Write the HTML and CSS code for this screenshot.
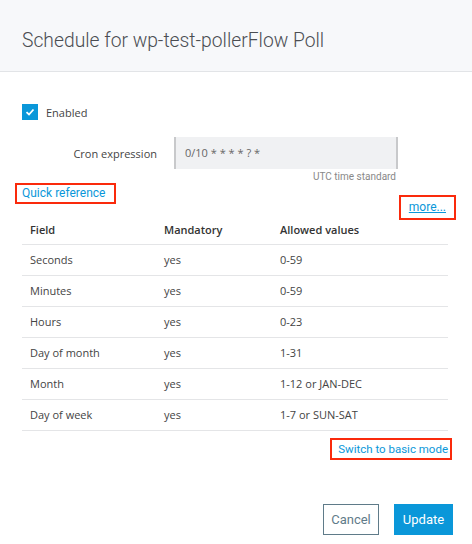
FILE: index.html
```html
<!DOCTYPE html>
<html>
<head>
<meta charset="utf-8">
<link rel="stylesheet" href="styles.css">
</head>
<body>
<div class="modal">
  <div class="modal-header">
    <h1 class="title">Schedule for wp-test-pollerFlow Poll</h1>
  </div>
  <div class="modal-body">
    <label class="check-row">
      <span class="checkbox">
        <svg width="10" height="8" viewBox="0 0 10 8"><path d="M1.5 4.2 L4 6.5 L8.5 1.5" fill="none" stroke="#fff" stroke-width="1.8"/></svg>
      </span>
      <span class="check-label">Enabled</span>
    </label>
    <div class="cron-row">
      <span class="cron-label">Cron expression</span>
      <div class="cron-input">0/10 * * * * ? *</div>
    </div>
    <div class="hint-row"><span class="hint">UTC time standard</span></div>
    <div class="ref-row"><a class="link boxed">Quick reference</a></div>
    <div class="more-row"><a class="link boxed more"><span class="u">more...</span></a></div>
    <table class="ref-table">
      <thead>
        <tr><th class="c1">Field</th><th class="c2">Mandatory</th><th>Allowed values</th></tr>
      </thead>
      <tbody>
        <tr><td>Seconds</td><td>yes</td><td>0-59</td></tr>
        <tr><td>Minutes</td><td>yes</td><td>0-59</td></tr>
        <tr><td>Hours</td><td>yes</td><td>0-23</td></tr>
        <tr><td>Day of month</td><td>yes</td><td>1-31</td></tr>
        <tr><td>Month</td><td>yes</td><td>1-12 or JAN-DEC</td></tr>
        <tr><td>Day of week</td><td>yes</td><td>1-7 or SUN-SAT</td></tr>
      </tbody>
    </table>
    <div class="switch-row"><a class="link boxed switch">Switch to basic mode</a></div>
  </div>
  <div class="modal-footer">
    <button class="btn btn-cancel">Cancel</button>
    <button class="btn btn-primary">Update</button>
  </div>
</div>
</body>
</html>
```

FILE: styles.css
```css
* { box-sizing: border-box; }
html, body { margin: 0; padding: 0; background: #fff; }
body { font-family: "Open Sans", sans-serif; color: #333; width: 472px; height: 544px; overflow: hidden; }

.modal-header {
  height: 72px;
  background: #f7f8fa;
  border-bottom: 1px solid #e2e4e7;
  padding: 29px 22px 0;
}
.title {
  margin: 0;
  font-family: Roboto, sans-serif;
  font-weight: 300;
  font-size: 19.3px;
  line-height: 24px;
  color: #4a4d52;
}

.modal-body { padding: 32px 24px 0 22px; }

.check-row { display: flex; align-items: center; height: 16px; }
.checkbox {
  width: 16px; height: 16px; background: #0a97d9;
  display: flex; align-items: center; justify-content: center;
}
.check-label { margin-left: 8px; font-size: 11px; color: #444; }

.cron-row { display: flex; align-items: center; margin-top: 17px; }
.cron-label { width: 135px; text-align: right; font-size: 11px; color: #444; }
.cron-input {
  margin-left: 17px;
  width: 224px; height: 32px;
  background: #f0f1f3;
  border-left: 2px solid #c8c9cb;
  border-right: 2px solid #c8c9cb;
  padding-left: 9px;
  font-size: 11px; line-height: 32px; color: #666;
}
.hint-row { display: flex; justify-content: flex-end; width: 374px; margin-top: 1px; height: 14px; }
.hint { font-family: Roboto, sans-serif; font-size: 10px; color: #888; line-height: 14px; }

.link { font-family: Roboto, sans-serif; font-size: 12px; color: #0a97d9; text-decoration: none; }
.boxed { display: block; border: 2px solid #fa2a0c; }
.ref-row { display: flex; margin-left: -7px; margin-top: -1px; }
.ref-row .boxed { padding: 0 9px 0 5px; line-height: 17px; height: 21px; }
.more-row { display: flex; justify-content: flex-end; margin-right: -8px; margin-top: -9px; }
.more { padding: 0 8px; line-height: 21px; height: 25px; }
.more .u { text-decoration: underline; }

.ref-table { width: 426px; border-collapse: collapse; margin-top: -7px; }
.ref-table th, .ref-table td {
  text-align: left; padding: 0 0 0 8px; height: 31px;
  border-bottom: 1px solid #e4e5e7;
  font-size: 11px;
}
.ref-table th { font-weight: 600; color: #333; padding-top: 3px; }
.ref-table td { color: #444; }
.ref-table .c1 { width: 134px; }
.ref-table .c2 { width: 116px; }

.switch-row { display: flex; justify-content: flex-end; margin-right: -4px; margin-top: 7px; }
.switch { padding: 0 2px 0 6px; line-height: 18px; height: 22px; font-size: 11.5px; }

.modal-footer { display: flex; justify-content: flex-end; gap: 15px; padding: 44px 19px 0 0; }
.btn {
  height: 31px; font-family: Roboto, sans-serif; font-size: 13px; margin: 0; padding: 0;
  cursor: pointer;
}
.btn-cancel { width: 56px; background: #fff; border: 1.5px solid #5f7b89; color: #5f7b89; }
.btn-primary { width: 59px; background: #0a97d9; border: none; color: #fff; }
```
